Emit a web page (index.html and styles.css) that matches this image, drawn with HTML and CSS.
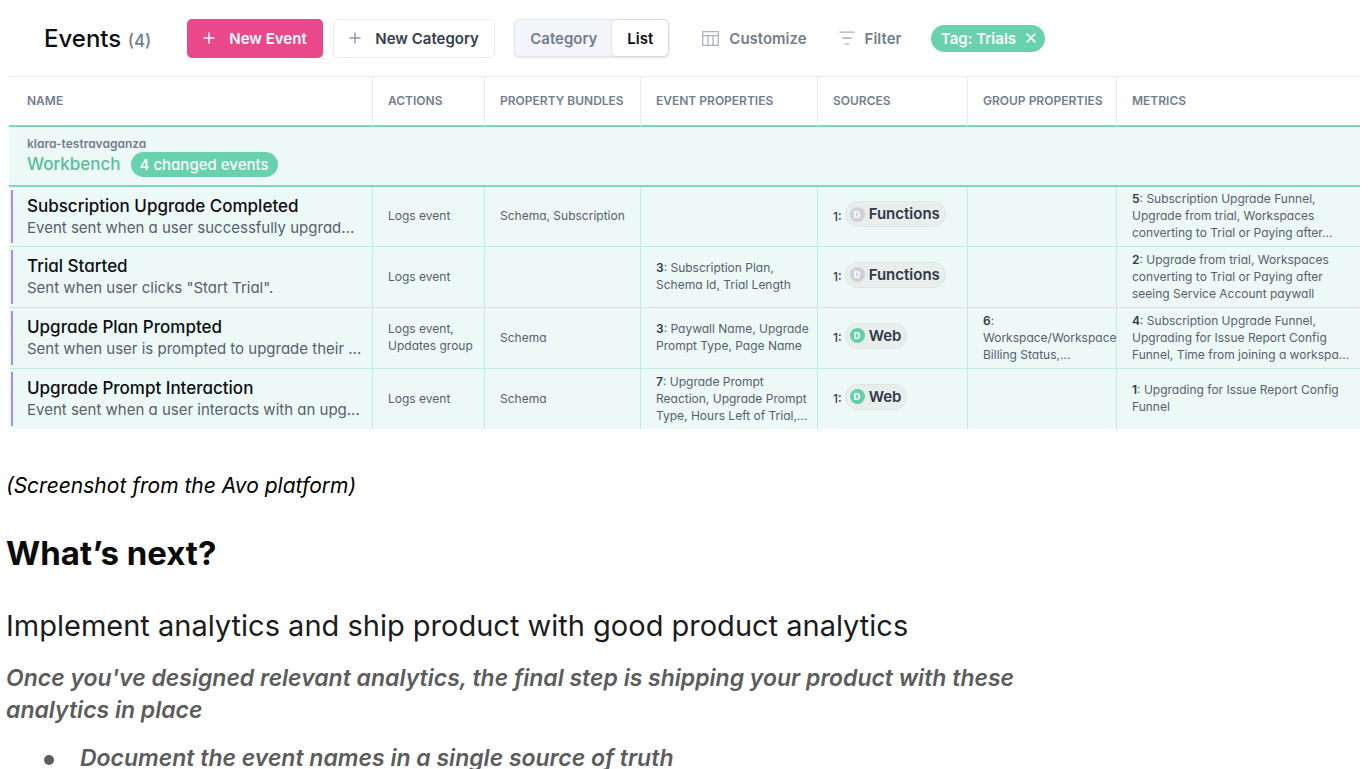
FILE: index.html
```html
<!DOCTYPE html>
<html lang="en">
<head>
<meta charset="utf-8">
<title>What’s next?</title>
<link rel="stylesheet" href="styles.css">
</head>
<body>
<section class="app">
  <header class="toolbar">
    <h2 class="title">Events <span class="count">(4)</span></h2>
    <button class="btn btn-primary"><svg width="12" height="12" viewBox="0 0 12 12"><path d="M6 .5v11M.5 6h11"/></svg>New Event</button>
    <button class="btn btn-plain"><svg width="12" height="12" viewBox="0 0 12 12"><path d="M6 .5v11M.5 6h11"/></svg>New Category</button>
    <div class="segment">
      <button class="seg">Category</button>
      <button class="seg seg-on">List</button>
    </div>
    <button class="tool tool-customize"><svg width="17" height="15" viewBox="0 0 17 15"><path d="M.7.7h15.6v13.6H.7zM.7 4.7h15.6M6 4.7v9.6M11 4.7v9.6"/></svg>Customize</button>
    <button class="tool tool-filter"><svg width="16" height="14" viewBox="0 0 16 14"><path d="M.5 1.2h15M3.2 7h9.6M5.8 12.8h4.4"/></svg>Filter</button>
    <button class="tag">Tag: Trials<svg width="10" height="10" viewBox="0 0 10 10"><path d="M.6.6l8.8 8.8M9.4.6L.6 9.4"/></svg></button>
  </header>
  <table class="events">
    <colgroup><col class="c-name"><col class="c-actions"><col class="c-bundles"><col class="c-props"><col class="c-sources"><col class="c-group"><col></colgroup>
    <thead>
      <tr><th>Name</th><th>Actions</th><th>Property bundles</th><th>Event properties</th><th>Sources</th><th>Group properties</th><th>Metrics</th></tr>
    </thead>
    <tbody>
      <tr class="bench"><td colspan="7">
        <div class="bench-owner">klara-testravaganza</div>
        <div class="bench-line"><span class="bench-name">Workbench</span><span class="bench-pill">4 changed events</span></div>
      </td></tr>
      <tr class="first">
        <td><div class="name">Subscription Upgrade Completed</div><div class="desc">Event sent when a user successfully upgrad...</div></td>
        <td>Logs event</td>
        <td>Schema, Subscription</td>
        <td></td>
        <td><div class="source"><span class="num">1:</span><span class="chip"><span class="dot dot-grey">D</span>Functions</span></div></td>
        <td></td>
        <td><b>5</b>: Subscription Upgrade Funnel,<br>Upgrade from trial, Workspaces<br>converting to Trial or Paying after...</td>
      </tr>
      <tr>
        <td><div class="name">Trial Started</div><div class="desc">Sent when user clicks "Start Trial".</div></td>
        <td>Logs event</td>
        <td></td>
        <td><b>3</b>: Subscription Plan,<br>Schema Id, Trial Length</td>
        <td><div class="source"><span class="num">1:</span><span class="chip"><span class="dot dot-grey">D</span>Functions</span></div></td>
        <td></td>
        <td><b>2</b>: Upgrade from trial, Workspaces<br>converting to Trial or Paying after<br>seeing Service Account paywall</td>
      </tr>
      <tr>
        <td><div class="name">Upgrade Plan Prompted</div><div class="desc">Sent when user is prompted to upgrade their ...</div></td>
        <td>Logs event,<br>Updates group</td>
        <td>Schema</td>
        <td><b>3</b>: Paywall Name, Upgrade<br>Prompt Type, Page Name</td>
        <td><div class="source"><span class="num">1:</span><span class="chip"><span class="dot">D</span>Web</span></div></td>
        <td><b>6</b>:<br>Workspace/Workspace<br>Billing Status,...</td>
        <td><b>4</b>: Subscription Upgrade Funnel,<br>Upgrading for Issue Report Config<br>Funnel, Time from joining a workspa...</td>
      </tr>
      <tr>
        <td><div class="name">Upgrade Prompt Interaction</div><div class="desc">Event sent when a user interacts with an upg...</div></td>
        <td>Logs event</td>
        <td>Schema</td>
        <td><b>7</b>: Upgrade Prompt<br>Reaction, Upgrade Prompt<br>Type, Hours Left of Trial,...</td>
        <td><div class="source"><span class="num">1:</span><span class="chip"><span class="dot">D</span>Web</span></div></td>
        <td></td>
        <td><b>1</b>: Upgrading for Issue Report Config<br>Funnel</td>
      </tr>
    </tbody>
  </table>
</section>
<article class="post">
  <p class="caption">(Screenshot from the Avo platform)</p>
  <h1>What’s next?</h1>
  <h3>Implement analytics and ship product with good product analytics</h3>
  <p class="lead">Once you've designed relevant analytics, the final step is shipping your product with these analytics in place</p>
  <ul><li>Document the event names in a single source of truth</li></ul>
</article>
</body>
</html>
```
FILE: styles.css
```css
* { box-sizing: border-box; }
body { margin: 0; background: #fff; color: #000; font-family: Inter, "Liberation Sans", sans-serif; }
button { margin: 0; font-family: inherit; cursor: pointer; }
svg { fill: none; stroke: currentColor; flex: none; }

.app { padding: 0 8px 0 9px; font-feature-settings: "cv11"; }
.toolbar { display: flex; align-items: center; height: 76px; padding-left: 35px; }
.title { margin: 0 36px 0 0; font-size: 24px; font-weight: 500; white-space: nowrap; color: #0c0e12; font-feature-settings: normal; }
.count { font-size: 17px; color: #737d8c; }
.btn { display: flex; align-items: center; height: 39px; border-radius: 5px; font-size: 15px; font-weight: 600; white-space: nowrap; }
.btn svg { margin-right: 14px; stroke-width: 1.4; }
.btn-primary { width: 136px; padding: 0 16px; border: 0; background: #e9488b; color: #fff; }
.btn-plain { width: 162px; margin-left: 10px; padding: 0 15px; border: 1px solid #e9ebf1; background: #fff; color: #343d4c; }
.btn-plain svg { color: #8b94a3; }
.segment { display: flex; width: 155px; height: 38px; margin-left: 19px; border: 1px solid #e3e7ed; border-radius: 5px; background: #f3f5fa; box-shadow: 0 1px 2px #0000001a; }
.seg { flex: 1 1 auto; padding: 0; border: 0; border-radius: 5px; background: none; color: #737d8c; font-size: 15px; font-weight: 600; }
.seg-on { flex: 0 0 56px; background: #fff; color: #0c0e12; box-shadow: 0 0 3px #00000026; }
.tool { display: flex; align-items: center; gap: 10px; padding: 0; border: 0; background: none; color: #737d8c; font-size: 15px; font-weight: 600; }
.tool svg { color: #a8b2c1; stroke-width: 1.3; }
.tool-customize { margin-left: 33px; }
.tool-filter { margin-left: 32px; }
.tag { display: flex; align-items: center; justify-content: center; gap: 10px; width: 114px; height: 27px; margin-left: 30px; padding: 0; border: 0; border-radius: 14px; background: #68d1ad; color: #fff; font-size: 15px; font-weight: 600; white-space: nowrap; }
.tag svg { stroke-width: 1.5; }

.events { width: 100%; table-layout: fixed; border-collapse: separate; border-spacing: 0; }
.c-name { width: 364px; }
.c-actions { width: 112px; }
.c-bundles { width: 156px; }
.c-props { width: 177px; }
.c-sources { width: 150px; }
.c-group { width: 149px; }
.events th { height: 51px; padding: 0 0 2px 15px; border-top: 1px solid #e7eaef; border-right: 1px solid #e7eaef; border-bottom: 2px solid #79d9ba; color: #737d8c; font-size: 12px; font-weight: 600; text-align: left; text-transform: uppercase; white-space: nowrap; }
.events td { height: 61px; padding: 0 0 2px 15px; border-right: 1px solid #bfeedf; border-bottom: 1px solid #bfeedf; background-color: #edf9f7; color: #565f6b; font-size: 12px; line-height: 17px; white-space: nowrap; overflow: hidden; }
.events th:first-child, .events td:first-child { padding-left: 18px; }
.events td:first-child { padding-bottom: 0; }
.events th:last-child, .events td:last-child { border-right: 0; }
.events td b { color: #303947; font-weight: 600; }
.events tr:not(.bench) td:first-child { background-image: linear-gradient(#a78bfa, #a78bfa); background-repeat: no-repeat; background-position: 2px 3px; background-size: 2px calc(100% - 6px); }
.events .first td { height: 60px; }
.events tr:last-child td { border-bottom: 0; }
.events tbody tr:last-child td { height: 60px; }
.events .bench td { height: 60px; border-bottom: 2px solid #79d9ba; }
.bench-owner { color: #737d8c; font-size: 12px; font-weight: 600; line-height: 16px; }
.bench-line { display: flex; align-items: center; gap: 10px; }
.bench-name { color: #57bd99; font-size: 17px; font-weight: 500; }
.bench-pill { padding: 0 9px; border-radius: 13px; background: #68d1ad; color: #fff; font-size: 15px; font-weight: 500; line-height: 25px; }
.name { color: #0c0e12; font-size: 17px; font-weight: 500; line-height: 22px; }
.desc { color: #565f6b; font-size: 15px; line-height: 22px; }
.source { display: flex; align-items: center; gap: 3px; padding-bottom: 3px; }
.num { color: #303947; font-weight: 500; padding-top: 4px; }
.chip { display: flex; align-items: center; gap: 4px; padding: 0 5px 0 4px; border: 1px solid #dfe6e4; border-radius: 13px; background: #e7eeec; color: #303947; font-size: 15px; font-weight: 600; line-height: 24px; }
.dot { width: 15px; height: 15px; border-radius: 50%; background: #62cfaa; color: #fff; font-size: 9px; font-weight: 800; line-height: 15px; text-align: center; }
.dot-grey { background: #cfd0dc; }

.post { max-width: 1040px; padding: 41px 6px 0; }
.caption { margin: 0; font-size: 21px; font-style: italic; line-height: 32px; }
.post h1 { margin: 30px 0 0; font-size: 33px; font-weight: 700; line-height: 42px; color: #0b0b0b; }
.post h3 { margin: 32px 0 0; font-size: 29px; font-weight: 400; line-height: 40px; color: #1c1c1c; }
.lead { margin: 16px 0 0; color: #5c5c5c; font-size: 23px; font-style: italic; font-weight: 600; line-height: 32px; }
.post ul { margin: 19px 0 0; padding-left: 74px; color: #5c5c5c; font-size: 23px; font-style: italic; font-weight: 600; line-height: 26px; list-style: none; }
.post li::before { content: ""; display: inline-block; width: 10px; height: 10px; margin: 0 26px 0 -36px; border-radius: 50%; background: #5c5c5c; vertical-align: 1px; }
```
